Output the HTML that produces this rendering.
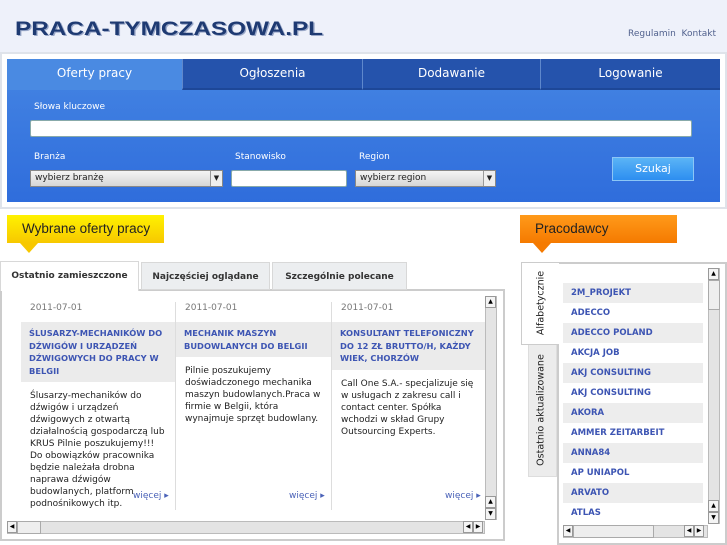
<!DOCTYPE html>
<html><head><meta charset="utf-8"><style>
*{margin:0;padding:0;box-sizing:border-box}
body{width:727px;height:545px;background:#fff;font-family:"DejaVu Sans","Liberation Sans",sans-serif;position:relative;overflow:hidden}
.a{position:absolute}
.hdr{left:0;top:0;width:727px;height:52px;background:#eef1fa}
.logo{left:15px;top:19px;font:bold 19px "Liberation Sans",sans-serif;color:#1e3a72;transform:scaleX(1.28);transform-origin:left;text-shadow:1px 1px 0 #9aa8c8;white-space:nowrap}
.links{right:11px;top:29px;font-size:9px;color:#52628e}
.panel{left:0;top:52px;width:727px;height:157px;border:2px solid #dfe3ea;background:#fff}
.blue{left:7px;top:59px;width:713px;height:143px;background:linear-gradient(#4585e3,#2f6ddc)}
.tab{top:59px;height:31px;color:#fff;font-size:12px;text-align:center;line-height:28px;background:#2553ac;border-left:1px solid #5f88cc;border-bottom:2px solid #1d4798}
.lbl{color:#fff;font-size:9px}
.inp{background:#fff;border:1px solid #8aa;border-radius:2px}
.sel{background:linear-gradient(#f4f4f4,#d6d6d6);border:1px solid #888;font-size:9px;color:#222;padding:2px 4px;height:17px}
.sel i{position:absolute;right:0;top:0;width:12px;height:15px;border-left:1px solid #999;background:#eee;font-style:normal;font-size:7px;text-align:center;line-height:15px}
.btn{left:612px;top:157px;width:82px;height:24px;background:linear-gradient(#5ab4f6,#2d8ef0);border:1px solid #8cc6f6;color:#fff;font-size:11px;text-align:center;line-height:22px}
.tag{height:28px;font:13.5px "Liberation Sans Narrow","Liberation Sans",sans-serif;color:#222;padding:6px 0 0 15px;white-space:nowrap}
.tri{width:0;height:0;border-left:9px solid transparent;border-right:9px solid transparent}
.lt{top:262px;height:28px;font-size:9px;font-weight:bold;color:#333;text-align:center;line-height:28px;background:#eceef0;border:1px solid #d8d8d8}
.box{border:1px solid #ccc;background:#fff}
.col{top:297px;font-size:9px}
.date{color:#777;font-size:9px;padding-left:9px;height:25px;line-height:22px}
.tit{background:#ebebeb;color:#3d55b3;font-weight:bold;font-size:8.3px;line-height:12.5px;padding:5px 8px}
.desc{color:#222;line-height:12px;padding:8px 9px}
.more{color:#4a62b8;font-size:9px}
.sb{background:#e4e4e4;border:1px solid #bbb}
.arr{width:11px;height:12px;background:#f4f4f4;border:1px solid #999;font-size:6px;text-align:center;line-height:10px;color:#000}
.emp{left:563px;width:140px;height:20px;font-size:8.5px;font-weight:bold;color:#3d55b3;line-height:20px;padding-left:8px}
.emp.g{background:#ededed}
.vt{font-size:9.5px;color:#222;white-space:nowrap;transform:translate(-50%,-50%) rotate(-90deg)}
</style></head><body>
<div class="a hdr"></div>
<div class="a logo">PRACA-TYMCZASOWA.PL</div>
<div class="a links">Regulamin&nbsp; Kontakt</div>
<div class="a panel"></div>
<div class="a blue"></div>
<div class="a tab" style="left:7px;width:175px;background:#4a8ae2;border:none;border-bottom:0">Oferty pracy</div>
<div class="a tab" style="left:182px;width:180px">Ogłoszenia</div>
<div class="a tab" style="left:362px;width:178px">Dodawanie</div>
<div class="a tab" style="left:540px;width:180px">Logowanie</div>
<div class="a lbl" style="left:34px;top:102px">Słowa kluczowe</div>
<div class="a inp" style="left:30px;top:120px;width:662px;height:17px"></div>
<div class="a lbl" style="left:34px;top:152px">Branża</div>
<div class="a lbl" style="left:235px;top:152px">Stanowisko</div>
<div class="a lbl" style="left:359px;top:152px">Region</div>
<div class="a sel" style="left:30px;top:170px;width:193px">wybierz branżę<i>▼</i></div>
<div class="a inp" style="left:231px;top:170px;width:116px;height:17px"></div>
<div class="a sel" style="left:355px;top:170px;width:141px">wybierz region<i>▼</i></div>
<div class="a btn">Szukaj</div>

<div class="a tag" style="left:7px;top:215px;width:157px;background:linear-gradient(#fff200,#f7c800)">Wybrane oferty pracy</div>
<div class="a tri" style="left:20px;top:243px;border-top:10px solid #f7c800"></div>
<div class="a tag" style="left:520px;top:215px;width:157px;background:linear-gradient(#ff9a1a,#f57a00)">Pracodawcy</div>
<div class="a tri" style="left:533px;top:243px;border-top:10px solid #f57a00"></div>

<div class="a box" style="left:0;top:289px;width:505px;height:252px;border-width:2px"></div>
<div class="a lt" style="left:0;top:261px;width:139px;height:30px;background:#fff;border-bottom:none;z-index:2">Ostatnio zamieszczone</div>
<div class="a lt" style="left:141px;width:129px">Najczęściej oglądane</div>
<div class="a lt" style="left:272px;width:135px">Szczególnie polecane</div>

<div class="a col" style="left:21px;width:154px"><div class="date">2011-07-01</div>
<div class="tit">ŚLUSARZY-MECHANIKÓW DO DŹWIGÓW I URZĄDZEŃ DŹWIGOWYCH DO PRACY W BELGII</div>
<div class="desc">Ślusarzy-mechaników do dźwigów i urządzeń dźwigowych z otwartą działalnością gospodarczą lub KRUS Pilnie poszukujemy!!! Do obowiązków pracownika będzie należała drobna naprawa dźwigów budowlanych, platform podnośnikowych itp.</div></div>
<div class="a" style="left:175px;top:302px;width:1px;height:208px;background:#ddd"></div>
<div class="a col" style="left:176px;width:155px"><div class="date">2011-07-01</div>
<div class="tit">MECHANIK MASZYN BUDOWLANYCH DO BELGII</div>
<div class="desc">Pilnie poszukujemy doświadczonego mechanika maszyn budowlanych.Praca w firmie w Belgii, która wynajmuje sprzęt budowlany.</div></div>
<div class="a" style="left:331px;top:302px;width:1px;height:208px;background:#ddd"></div>
<div class="a col" style="left:332px;width:153px"><div class="date">2011-07-01</div>
<div class="tit">KONSULTANT TELEFONICZNY DO 12 ZŁ BRUTTO/H, KAŻDY WIEK, CHORZÓW</div>
<div class="desc">Call One S.A.- specjalizuje się w usługach z zakresu call i contact center. Spółka wchodzi w skład Grupy Outsourcing Experts.</div></div>
<div class="a more" style="left:133px;top:491px">więcej ▸</div>
<div class="a more" style="left:289px;top:491px">więcej ▸</div>
<div class="a more" style="left:445px;top:491px">więcej ▸</div>
<div class="a sb" style="left:485px;top:296px;width:12px;height:224px"></div>
<div class="a arr" style="left:485px;top:296px">▲</div>
<div class="a arr" style="left:485px;top:496px">▲</div>
<div class="a arr" style="left:485px;top:508px">▼</div>
<div class="a sb" style="left:7px;top:521px;width:478px;height:13px"></div>
<div class="a arr" style="left:7px;top:521px;width:10px">◀</div>
<div class="a" style="left:17px;top:521px;width:24px;height:13px;background:#eee;border:1px solid #aaa"></div>
<div class="a arr" style="left:463px;top:521px;width:10px">◀</div>
<div class="a arr" style="left:473px;top:521px;width:10px">▶</div>

<div class="a box" style="left:557px;top:262px;width:170px;height:283px;border-width:2px"></div>
<div class="a" style="left:528px;top:343px;width:29px;height:134px;background:#ececec;border:1px solid #ddd"></div>
<div class="a" style="left:521px;top:262px;width:38px;height:83px;background:#fff;border:1px solid #ccc;border-right:none;z-index:2"></div>
<div class="a vt" style="left:541px;top:303px;z-index:3">Alfabetycznie</div>
<div class="a vt" style="left:541px;top:410px">Ostatnio aktualizowane</div>
<div class="a emp g" style="top:283px">2M_PROJEKT</div>
<div class="a emp" style="top:303px">ADECCO</div>
<div class="a emp g" style="top:323px">ADECCO POLAND</div>
<div class="a emp" style="top:343px">AKCJA JOB</div>
<div class="a emp g" style="top:363px">AKJ CONSULTING</div>
<div class="a emp" style="top:383px">AKJ CONSULTING</div>
<div class="a emp g" style="top:403px">AKORA</div>
<div class="a emp" style="top:423px">AMMER ZEITARBEIT</div>
<div class="a emp g" style="top:443px">ANNA84</div>
<div class="a emp" style="top:463px">AP UNIAPOL</div>
<div class="a emp g" style="top:483px">ARVATO</div>
<div class="a emp" style="top:503px">ATLAS</div>
<div class="a sb" style="left:708px;top:268px;width:12px;height:256px"></div>
<div class="a arr" style="left:708px;top:268px">▲</div>
<div class="a" style="left:708px;top:280px;width:12px;height:30px;background:#eee;border:1px solid #aaa"></div>
<div class="a arr" style="left:708px;top:500px">▲</div>
<div class="a arr" style="left:708px;top:512px">▼</div>
<div class="a sb" style="left:563px;top:525px;width:145px;height:13px"></div>
<div class="a arr" style="left:563px;top:525px;width:10px">◀</div>
<div class="a" style="left:573px;top:525px;width:81px;height:13px;background:#eee;border:1px solid #aaa"></div>
<div class="a arr" style="left:684px;top:525px;width:10px">◀</div>
<div class="a arr" style="left:694px;top:525px;width:10px">▶</div>
</body></html>
